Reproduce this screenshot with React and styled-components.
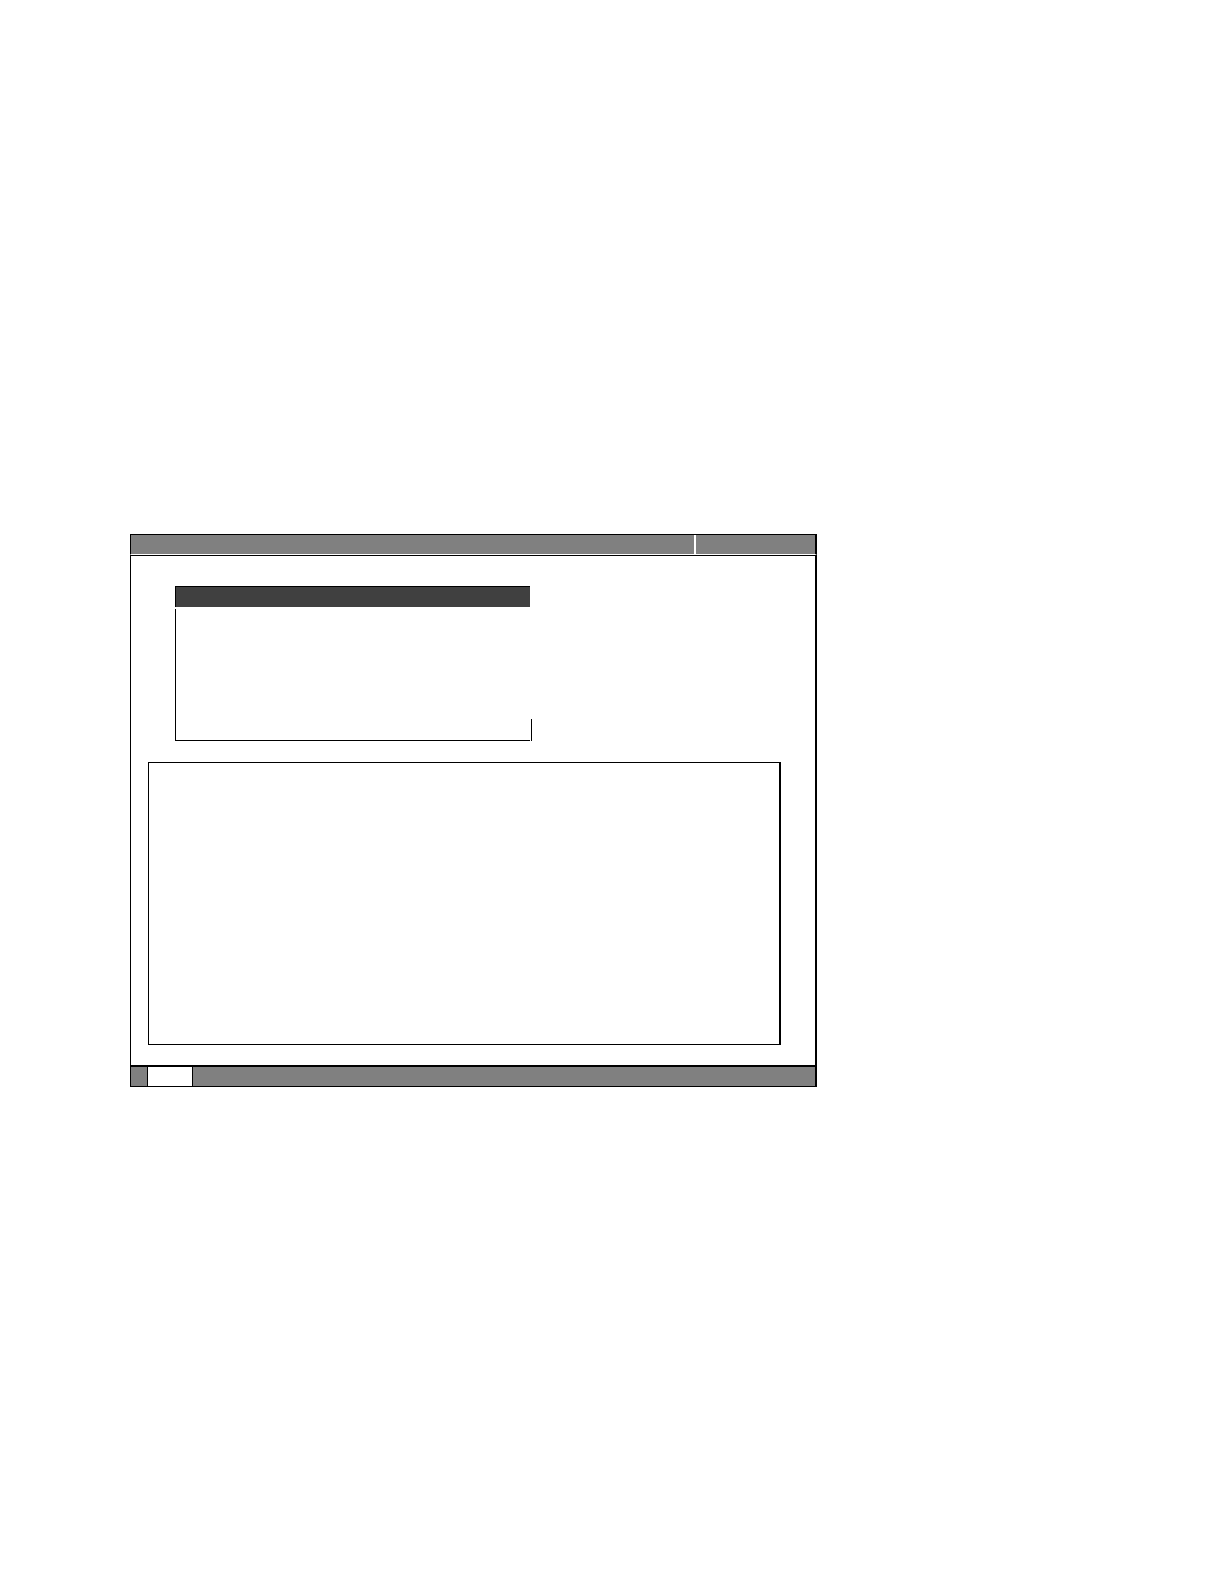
import React from "react";
import styled, { createGlobalStyle } from "styled-components";

const GlobalStyle = createGlobalStyle`
  html, body {
    margin: 0;
    padding: 0;
    background: #ffffff;
    font-family: "Liberation Sans", Arial, sans-serif;
  }
`;

const Page = styled.div`
  width: 1224px;
  min-height: 1584px;
  padding: 534px 0 0 130px;
  box-sizing: border-box;
`;

const Frame = styled.div`
  width: 687px;
  display: flex;
  flex-direction: column;
`;

const TitleBar = styled.div`
  display: flex;
  height: 21px;
  box-sizing: border-box;
  border-top: 1px solid #000;
  border-left: 1px solid #000;
  border-right: 2px solid #000;
  border-bottom: 1px solid #fff;
  background: #808080;
`;

const TitleCell = styled.div`
  flex: ${(p) => (p.grow ? 1 : "none")};
  width: ${(p) => (p.width ? `${p.width}px` : "auto")};
  border-right: ${(p) => (p.divider ? "2px solid #fff" : "none")};
`;

const Body = styled.div`
  height: 510px;
  box-sizing: border-box;
  border-top: 1px solid #000;
  border-left: 1px solid #000;
  border-right: 2px solid #000;
  padding: 30px 0 0 44px;
  display: flex;
  flex-direction: column;
`;

const Panel = styled.div`
  width: 355px;
  display: flex;
  flex-direction: column;
`;

const PanelHeader = styled.div`
  height: 21px;
  box-sizing: border-box;
  border-top: 1px solid #000;
  border-left: 1px solid #000;
  background: #404040;
`;

const PanelBody = styled.div`
  position: relative;
  height: 132px;
  margin-top: 2px;
  box-sizing: border-box;
  border-left: 1px solid #000;
  border-bottom: 1px solid #000;

  &::after {
    content: "";
    position: absolute;
    right: -2px;
    bottom: -1px;
    width: 1px;
    height: 22px;
    background: #000;
  }
`;

const Viewer = styled.div`
  width: 633px;
  height: 283px;
  margin: 21px 0 0 -27px;
  box-sizing: border-box;
  border: 1px solid #000;
  border-right-width: 2px;
`;

const StatusBar = styled.div`
  display: flex;
  height: 22px;
  box-sizing: border-box;
  border-top: 2px solid #000;
  border-bottom: 1px solid #000;
  border-left: 1px solid #000;
  border-right: 2px solid #000;
  background: #808080;
`;

const StatusCell = styled.div`
  flex: ${(p) => (p.grow ? 1 : "none")};
  width: ${(p) => (p.width ? `${p.width}px` : "auto")};
  background: ${(p) => (p.light ? "#ffffff" : "transparent")};
  border-left: ${(p) => (p.light ? "1px solid #000" : "none")};
  border-right: ${(p) => (p.light ? "1px solid #000" : "none")};
`;

export default function App() {
  return (
    <>
      <GlobalStyle />
      <Page>
        <Frame>
          <TitleBar>
            <TitleCell width={563} divider />
            <TitleCell grow />
          </TitleBar>
          <Body>
            <Panel>
              <PanelHeader />
              <PanelBody />
            </Panel>
            <Viewer />
          </Body>
          <StatusBar>
            <StatusCell width={16} />
            <StatusCell width={44} light />
            <StatusCell grow />
          </StatusBar>
        </Frame>
      </Page>
    </>
  );
}
